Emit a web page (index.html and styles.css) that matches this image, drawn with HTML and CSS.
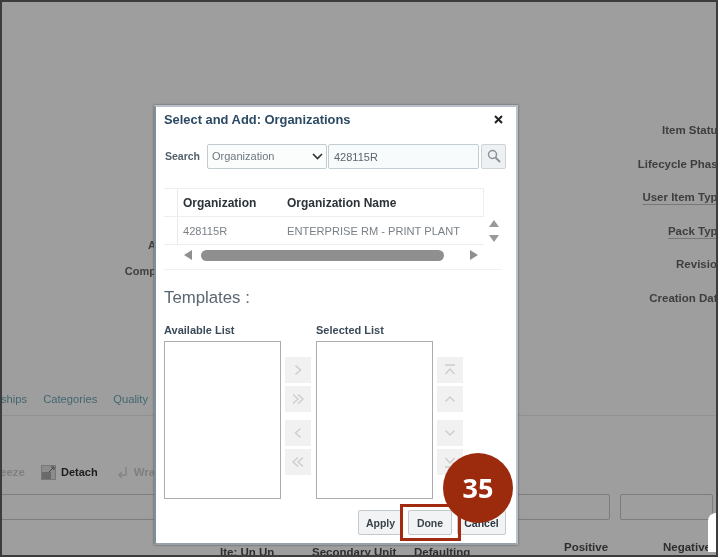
FILE: index.html
```html
<!DOCTYPE html>
<html lang="en">
<head>
<meta charset="utf-8">
<title>Select and Add: Organizations</title>
<link rel="stylesheet" href="styles.css">
</head>
<body>
<div class="screen">
  <div class="page">
    <div class="fields">
      <div class="fields-left">
        <span class="fl fl-a">A</span>
        <span class="fl">Comp</span>
      </div>
      <div class="fields-right">
        <span class="fr">Item Status</span>
        <span class="fr">Lifecycle Phase</span>
        <span class="fr fr-u">User Item Type</span>
        <span class="fr fr-u">Pack Type</span>
        <span class="fr">Revision</span>
        <span class="fr">Creation Date</span>
      </div>
    </div>
    <div class="tabs">
      <span class="tab-cut">ships</span><span>Categories</span><span>Quality</span>
    </div>
    <div class="toolbar">
      <span class="tool-off tool-cut">eeze</span>
      <svg class="tool-icon" width="15" height="15" viewBox="0 0 15 15"><rect x="0.5" y="0.5" width="14" height="14" fill="#8c8c8c" stroke="#777"/><rect x="1" y="7" width="9" height="7" fill="#6a6a6a"/><path d="M8 7l5-5M10 2h3v3" stroke="#444" fill="none"/></svg>
      <span class="tool-on">Detach</span>
      <svg class="tool-icon tool-icon-wrap" width="11" height="13" viewBox="0 0 11 13"><path d="M9 1v8H2M5 6L2 9l3 3" stroke="#858585" stroke-width="1.6" fill="none"/></svg>
      <span class="tool-off">Wrap</span>
    </div>
    <div class="filters">
      <div class="filter filter-wide"></div>
      <div class="filter filter-narrow"></div>
    </div>
    <div class="columns">
      <span class="col col-item">Ite: Un Un</span>
      <span class="col col-sec">Secondary Unit</span>
      <span class="col col-def">Defaulting</span>
      <span class="col col-pos">Positive</span>
      <span class="col col-neg">Negative</span>
    </div>
  </div>

  <div class="corner"></div>

  <section class="dialog">
    <header class="dlg-head">
      <h1 class="dlg-title">Select and Add: Organizations</h1>
      <svg class="dlg-close" width="9" height="9" viewBox="0 0 9 9"><path d="M1 1l7 7M8 1L1 8" stroke="#222" stroke-width="2"/></svg>
    </header>

    <div class="search">
      <label class="search-label">Search</label>
      <div class="select">
        <span>Organization</span>
        <svg width="11" height="7" viewBox="0 0 11 7"><path d="M1 1l4.500 4.500L10 1" stroke="#333" stroke-width="1.700" fill="none"/></svg>
      </div>
      <div class="input">428115R</div>
      <div class="search-btn">
        <svg width="14" height="14" viewBox="0 0 14 14"><circle cx="5.500" cy="5.500" r="4" stroke="#8a9299" stroke-width="1.500" fill="none"/><path d="M8.500 8.500l4.500 4.500" stroke="#8a9299" stroke-width="2"/></svg>
      </div>
    </div>

    <div class="table">
      <div class="thead">
        <div class="cell-gutter"></div>
        <div class="cell cell-org th">Organization</div>
        <div class="cell th">Organization Name</div>
      </div>
      <div class="trow">
        <div class="cell-gutter"></div>
        <div class="cell cell-org">428115R</div>
        <div class="cell">ENTERPRISE RM - PRINT PLANT</div>
      </div>
      <div class="vscroll">
        <span class="tri tri-up"></span>
        <span class="tri tri-down"></span>
      </div>
      <div class="hscroll">
        <span class="tri tri-left"></span>
        <span class="thumb"></span>
        <span class="tri tri-right"></span>
      </div>
    </div>

    <h2 class="templates">Templates :</h2>

    <div class="shuttle">
      <div class="list-col">
        <div class="list-label">Available List</div>
        <div class="list-box"></div>
      </div>
      <div class="move-col">
        <div class="move-btn">
          <svg width="10" height="12" viewBox="0 0 10 12"><path d="M2.500 1.500L7.500 6l-5 4.500" stroke="#cdcdcd" stroke-width="1.400" fill="none"/></svg>
        </div>
        <div class="move-btn">
          <svg width="14" height="12" viewBox="0 0 14 12"><path d="M2 1.500L7 6l-5 4.500M7 1.500L12 6l-5 4.500" stroke="#cdcdcd" stroke-width="1.400" fill="none"/></svg>
        </div>
        <div class="move-btn move-gap">
          <svg width="10" height="12" viewBox="0 0 10 12"><path d="M7.500 1.500L2.500 6l5 4.500" stroke="#cdcdcd" stroke-width="1.400" fill="none"/></svg>
        </div>
        <div class="move-btn">
          <svg width="14" height="12" viewBox="0 0 14 12"><path d="M7 1.500L2 6l5 4.500M12 1.500L7 6l5 4.500" stroke="#cdcdcd" stroke-width="1.400" fill="none"/></svg>
        </div>
      </div>
      <div class="list-col">
        <div class="list-label">Selected List</div>
        <div class="list-box"></div>
      </div>
      <div class="move-col">
        <div class="move-btn">
          <svg width="14" height="12" viewBox="0 0 14 12"><path d="M2 1h10M2.500 10L7 5l4.500 5" stroke="#cdcdcd" stroke-width="1.400" fill="none"/></svg>
        </div>
        <div class="move-btn">
          <svg width="14" height="12" viewBox="0 0 14 12"><path d="M2.500 8.500L7 4l4.500 4.500" stroke="#cdcdcd" stroke-width="1.400" fill="none"/></svg>
        </div>
        <div class="move-btn move-gap">
          <svg width="14" height="12" viewBox="0 0 14 12"><path d="M2.500 3.500L7 8l4.500-4.500" stroke="#cdcdcd" stroke-width="1.400" fill="none"/></svg>
        </div>
        <div class="move-btn">
          <svg width="14" height="12" viewBox="0 0 14 12"><path d="M2 11h10M2.500 2L7 7l4.500-5" stroke="#cdcdcd" stroke-width="1.400" fill="none"/></svg>
        </div>
      </div>
    </div>

    <footer class="actions">
      <button class="btn btn-apply">Apply</button>
      <button class="btn btn-done">Done</button>
      <button class="btn btn-cancel">Cancel</button>
    </footer>
  </section>

  <div class="highlight"></div>
  <div class="badge">35</div>
</div>
</body>
</html>
```

FILE: styles.css
```css
* { box-sizing: border-box; }
html, body { margin: 0; padding: 0; }
body { width: 718px; height: 557px; overflow: hidden; background: #3a3a3a; }

.screen {
  position: relative;
  width: 718px;
  height: 557px;
  overflow: hidden;
  border-style: solid;
  border-color: #3c3c3c;
  border-width: 2px;
  background: #9e9e9e;
  font-family: "Liberation Sans", Arial, sans-serif;
  filter: blur(0.35px);
}

/* Page behind the dialog */
.page { display: flex; flex-direction: column; height: 100%; }
.page > * { flex: none; }

.fields { display: flex; justify-content: space-between; height: 390px; }
.fields-left {
  width: 154px;
  display: flex;
  flex-direction: column;
  align-items: flex-end;
  gap: 12px;
  padding-top: 236px;
}
.fl { font-size: 11px; font-weight: 700; line-height: 14px; color: #3e3e3e; }
.fields-right {
  display: flex;
  flex-direction: column;
  align-items: flex-end;
  gap: 19.600px;
  padding-top: 121px;
  margin-right: -8px;
}
.fr { font-size: 11.500px; font-weight: 700; line-height: 14px; color: #3e3e3e; white-space: nowrap; }
.fr-u { text-decoration: underline; text-decoration-color: #777; text-underline-offset: 3px; }

.tabs {
  display: flex;
  gap: 16px;
  height: 24px;
  border-bottom: 1px solid #929292;
  font-size: 11.200px;
  line-height: 14px;
  color: #43676f;
  overflow: hidden;
}
.tab-cut { margin-left: -1px; }

.toolbar {
  display: flex;
  align-items: center;
  height: 16px;
  margin-top: 48px;
  font-size: 11px;
  font-weight: 700;
}
.tool-off { color: #7f7f7f; font-size: 11.500px; }
.tool-cut { margin-left: -2px; width: 41px; }
.tool-on { color: #1c1c1c; margin-left: 5px; }
.tool-icon { flex: none; }
.tool-icon-wrap { margin-left: 19px; margin-right: 6px; }

.filters {
  display: flex;
  gap: 10px;
  margin-top: 14px;
  margin-left: -4px;
  padding-right: 3px;
}
.filter {
  height: 26px;
  border: 1px solid #7d7d7d;
  border-radius: 2px;
}
.filter-wide { flex: 1; }
.filter-narrow { width: 93px; }

.columns {
  display: flex;
  padding-left: 218px;
  margin-top: 26px;
  font-size: 11.500px;
  font-weight: 700;
  line-height: 13px;
  color: #2e2e2e;
  white-space: nowrap;
}
.col-item { width: 92px; }
.col-sec { width: 102px; }
.col-def { width: 150px; }
.col-pos { width: 99px; margin-top: -5px; }
.col-neg { margin-top: -5px; }

.corner {
  position: absolute;
  right: 0;
  bottom: 3px;
  width: 8px;
  height: 39px;
  background: #fff;
  border-top-left-radius: 9px;
}

/* Dialog */
.dialog {
  position: absolute;
  left: 152px;
  top: 103px;
  width: 364px;
  height: 440px;
  background: #fff;
  border: 2px solid;
  border-color: #b9c2cc #b9c2cc #98a0a8 #7f8f99;
  box-shadow: 0 0 2px #555;
  padding: 0 10px 0 8px;
  display: flex;
  flex-direction: column;
}

.dlg-head {
  display: flex;
  align-items: center;
  justify-content: space-between;
  height: 24px;
  padding-right: 3px;
}
.dlg-title {
  margin: 0;
  font-size: 12.900px;
  font-weight: 700;
  color: #2c4a64;
}

.search {
  display: flex;
  align-items: center;
  height: 26px;
  margin-top: 12px;
}
.search-label { width: 43px; padding-left: 1px; font-size: 10.500px; font-weight: 700; color: #54606a; }
.select {
  display: flex;
  align-items: center;
  justify-content: space-between;
  width: 120px;
  height: 25px;
  padding: 0 3px 0 4px;
  border: 1px solid #c2cbd0;
  background: #fbfcfc;
  border-radius: 2px;
  font-size: 11px;
  color: #6d7880;
}
.input {
  width: 151px;
  height: 25px;
  margin-left: 1px;
  margin-top: 1px;
  padding: 0 5px;
  border: 1px solid #c2ced4;
  background: #f8fbfc;
  border-radius: 2px;
  font-size: 11px;
  line-height: 25px;
  color: #5c666e;
}
.search-btn {
  display: flex;
  align-items: center;
  justify-content: center;
  width: 25px;
  height: 25px;
  margin-left: 2px;
  background: #eef1f3;
  border: 1px solid #cdd4d8;
  border-radius: 2px;
}

.table {
  position: relative;
  margin-top: 19px;
  width: 338px;
}
.thead, .trow { display: flex; width: 320px; }
.thead {
  height: 29px;
  border-top: 1px solid #eceeef;
  border-bottom: 1px solid #eceeef;
  border-right: 1px solid #eceeef;
  align-items: center;
}
.trow { height: 28px; align-items: center; border-bottom: 1px solid #eceeef; }
.cell-gutter { width: 14px; height: 100%; border-right: 1px solid #e8eaeb; }
.cell { font-size: 11.100px; color: #7a8086; white-space: nowrap; }
.cell-org { width: 109px; padding-left: 5px; }
.th { font-size: 12px; font-weight: 700; color: #2b3238; }

.vscroll {
  position: absolute;
  right: 3px;
  top: 32px;
  display: flex;
  flex-direction: column;
  gap: 8px;
}
.tri { display: block; width: 0; height: 0; border-style: solid; border-color: transparent; }
.tri-up { border-width: 0 5.500px 7px; border-bottom-color: #999; }
.tri-down { border-width: 7px 5.500px 0; border-top-color: #999; }
.tri-left { border-width: 5.500px 8px 5.500px 0; border-right-color: #8f8f8f; }
.tri-right { border-width: 5.500px 0 5.500px 8px; border-left-color: #8f8f8f; }

.hscroll {
  display: flex;
  align-items: center;
  height: 25px;
  padding: 0 0 4px 20px;
  border-bottom: 1px solid #eef0f1;
}
.thumb {
  width: 243px;
  height: 11px;
  margin: 0 26px 0 9px;
  border-radius: 6px;
  background: #8f8f8f;
}

.templates {
  margin: 18px 0 0;
  font-size: 16.800px;
  font-weight: 400;
  line-height: 20px;
  color: #5a6672;
}

.shuttle { display: flex; margin-top: 16px; }
.list-col { width: 117px; }
.list-label { height: 17px; font-size: 11px; font-weight: 700; line-height: 13px; color: #3a4a58; white-space: nowrap; }
.list-box { height: 158px; border: 1px solid #a9adb1; background: #fff; }
.move-col { width: 35px; padding: 33px 0 0 4px; display: flex; flex-direction: column; gap: 3px; }
.move-btn {
  display: flex;
  align-items: center;
  justify-content: center;
  width: 26px;
  height: 26px;
  background: #f1f1f1;
}
.move-gap { margin-top: 5px; }

.actions {
  display: flex;
  justify-content: flex-end;
  align-items: center;
  gap: 5px;
  margin-top: 11px;
}
.btn {
  height: 25px;
  padding: 0;
  border: 1px solid #c3c9cd;
  border-radius: 2px;
  background: #f1f3f4;
  font-family: "Liberation Sans", Arial, sans-serif;
  font-size: 10.500px;
  font-weight: 700;
  color: #39434b;
}
.btn-apply { width: 45px; }
.btn-done { width: 44px; }
.btn-cancel { width: 49px; color: #2e3840; }

/* Tutorial annotation */
.highlight {
  position: absolute;
  left: 398px;
  top: 502px;
  width: 61px;
  height: 37px;
  border: 3px solid #a12a10;
}
.badge {
  position: absolute;
  left: 441px;
  top: 451px;
  width: 70px;
  height: 70px;
  border-radius: 50%;
  background: #9c2a0c;
  color: #fff;
  font-family: "Open Sans", "Noto Sans", sans-serif;
  font-size: 27px;
  font-weight: 700;
  line-height: 70px;
  text-align: center;
}
```
